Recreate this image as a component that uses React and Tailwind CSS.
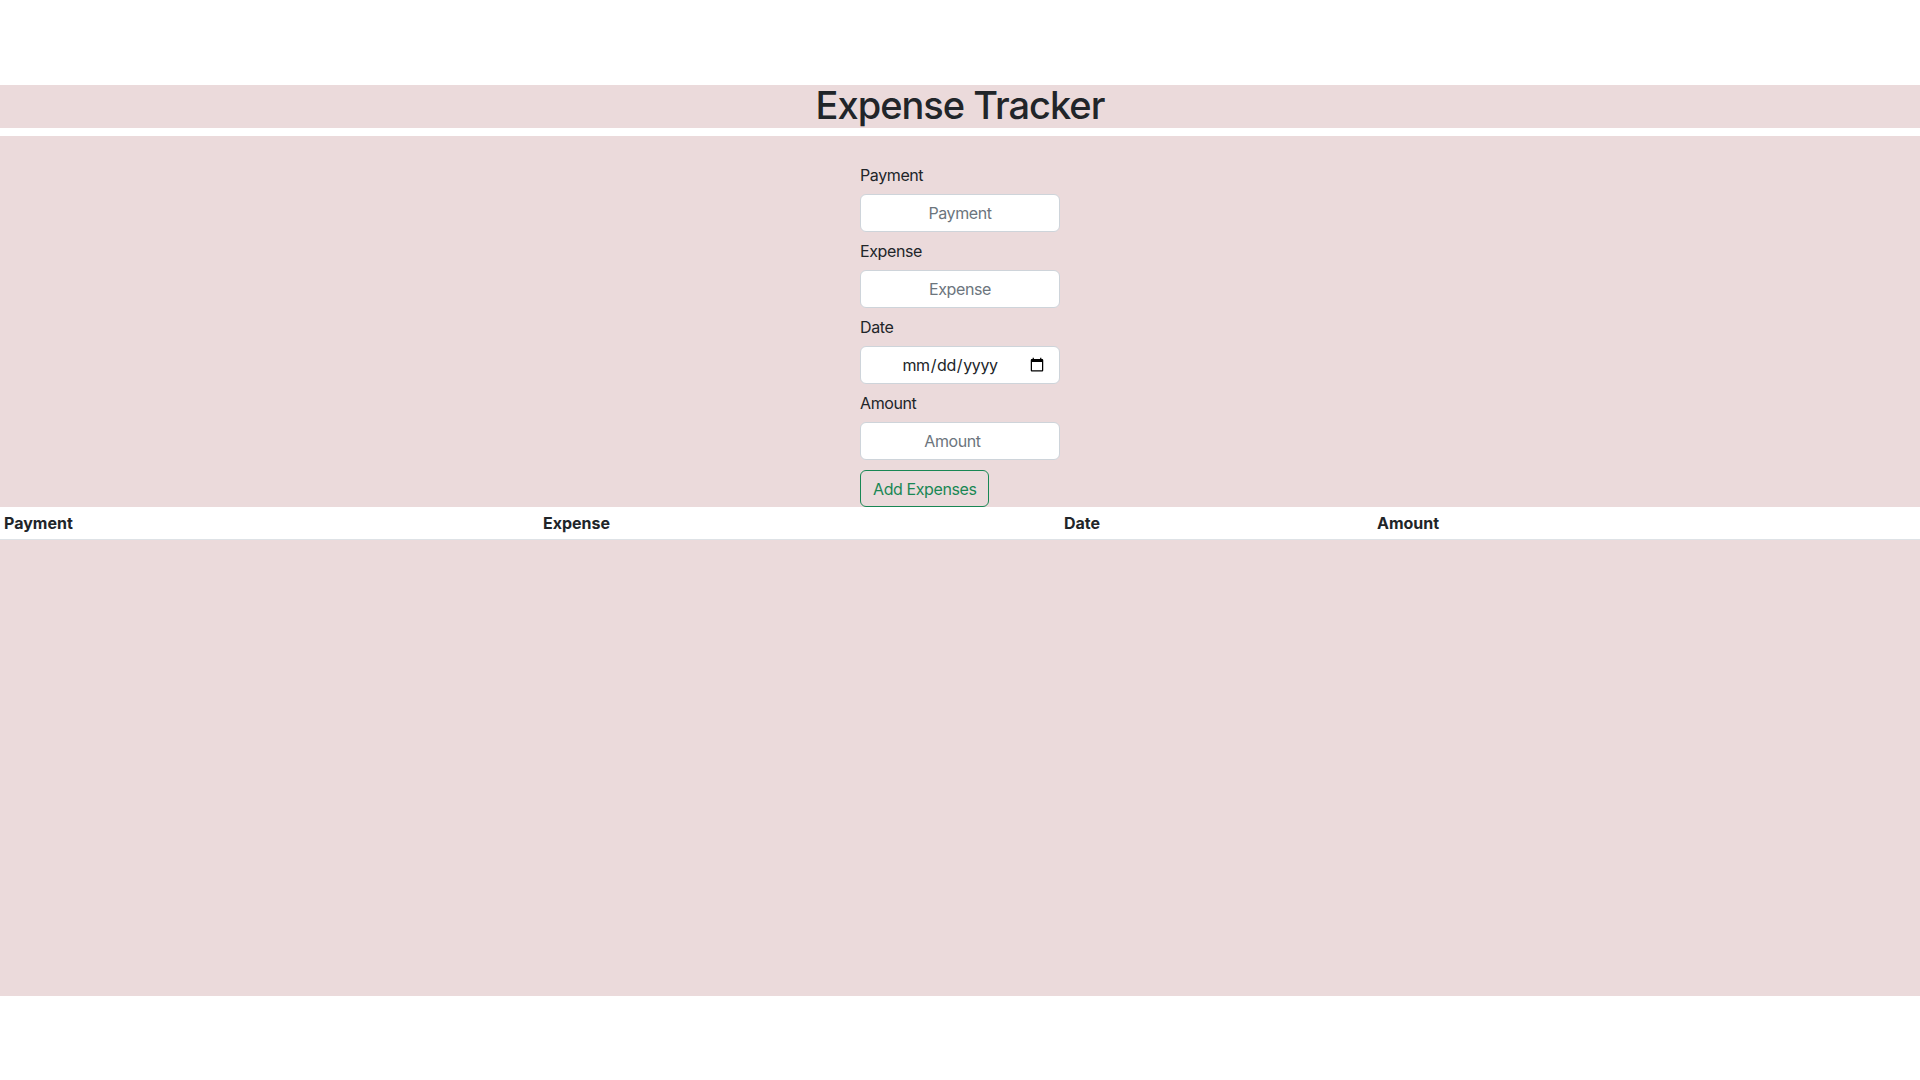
import React, { useState } from 'react';

const font = { fontFamily: 'Inter, "Liberation Sans", sans-serif' };

function Field({ label, type = 'text', placeholder, value, onChange }) {
  return (
    <div className="flex flex-col">
      <label className="h-6 leading-6 mb-[7px] text-[16px] tracking-[-0.4px] text-[#212529]">{label}</label>
      <input
        type={type}
        placeholder={placeholder}
        value={value}
        onChange={onChange}
        className="h-[38px] w-[200px] mb-[7px] px-3 rounded-md border border-[#ced4da] bg-white text-center text-[16px] tracking-[-0.4px] text-[#212529] placeholder:text-[#6c757d] outline-none [&::-webkit-datetime-edit]:justify-center"
      />
    </div>
  );
}

export default function App() {
  const [form, setForm] = useState({ payment: '', expense: '', date: '', amount: '' });
  const [rows, setRows] = useState([]);

  const set = (k) => (e) => setForm({ ...form, [k]: e.target.value });

  const addExpense = (e) => {
    e.preventDefault();
    setRows([...rows, form]);
    setForm({ payment: '', expense: '', date: '', amount: '' });
  };

  return (
    <div className="min-h-[1080px] bg-white pt-[85px]" style={font}>
      {/* Header */}
      <h1 className="h-[43px] leading-[40px] mb-2 bg-[#ebdadb] text-center text-[38px] tracking-[-1px] font-medium text-[#212529]">
        Expense Tracker
      </h1>

      {/* Main */}
      <div className="h-[860px] bg-[#ebdadb] pt-[27px]">
        <form onSubmit={addExpense} className="w-[200px] mx-auto flex flex-col">
          <Field label="Payment" placeholder="Payment" value={form.payment} onChange={set('payment')} />
          <Field label="Expense" placeholder="Expense" value={form.expense} onChange={set('expense')} />
          <Field label="Date" type="date" value={form.date} onChange={set('date')} />
          <Field label="Amount" type="number" placeholder="Amount" value={form.amount} onChange={set('amount')} />
          <button
            type="submit"
            className="self-start mt-[3px] h-[37px] px-3 rounded-md border border-[#198754] text-[#198754] text-[16px] tracking-[-0.4px] hover:bg-[#198754] hover:text-white"
          >
            Add Expenses
          </button>
        </form>

        {/* Table */}
        <table className="w-full table-fixed border-collapse text-[16px] text-[#212529]">
          <colgroup>
            <col className="w-[539px]" />
            <col className="w-[521px]" />
            <col className="w-[313px]" />
            <col />
          </colgroup>
          <thead>
            <tr className="bg-white">
              <th className="px-1 py-1 text-left font-bold leading-6 border-b border-[#dee2e6]">Payment</th>
              <th className="px-1 py-1 text-left font-bold leading-6 border-b border-[#dee2e6]">Expense</th>
              <th className="px-1 py-1 text-left font-bold leading-6 border-b border-[#dee2e6]">Date</th>
              <th className="px-1 py-1 text-left font-bold leading-6 border-b border-[#dee2e6]">Amount</th>
            </tr>
          </thead>
          <tbody>
            {rows.map((r, i) => (
              <tr key={i} className="bg-white">
                <td className="px-1 py-1 border-b border-[#dee2e6]">{r.payment}</td>
                <td className="px-1 py-1 border-b border-[#dee2e6]">{r.expense}</td>
                <td className="px-1 py-1 border-b border-[#dee2e6]">{r.date}</td>
                <td className="px-1 py-1 border-b border-[#dee2e6]">{r.amount}</td>
              </tr>
            ))}
          </tbody>
        </table>
      </div>
    </div>
  );
}
